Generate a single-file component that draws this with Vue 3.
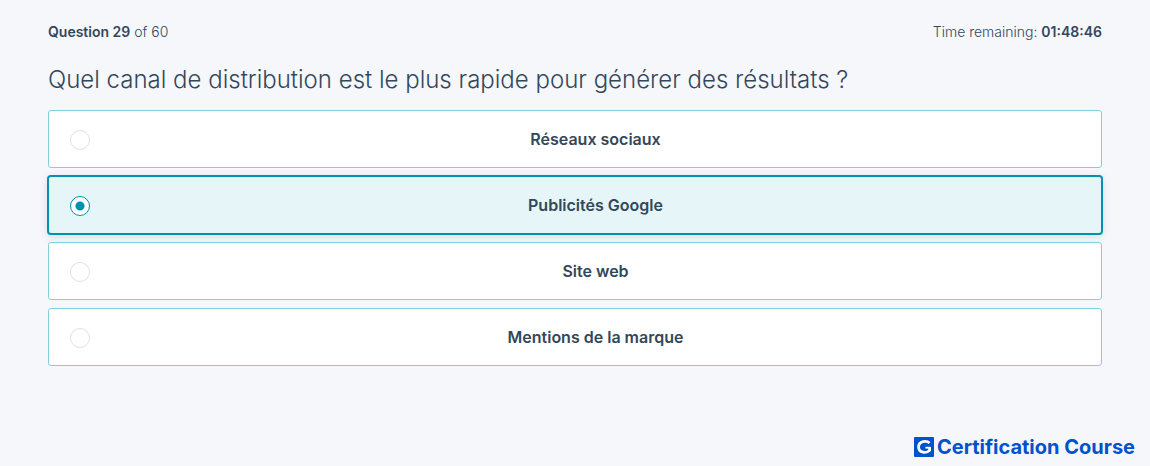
<script setup>
import { ref } from 'vue'

const options = ['Réseaux sociaux', 'Publicités Google', 'Site web', 'Mentions de la marque']
const selected = ref('Publicités Google')
</script>

<template>
  <main class="exam">
    <header class="status">
      <p><strong>Question 29</strong> of 60</p>
      <p>Time remaining: <strong>01:48:46</strong></p>
    </header>
    <h1 id="question" class="question">Quel canal de distribution est le plus rapide pour générer des résultats ?</h1>
    <div class="options" role="radiogroup" aria-labelledby="question">
      <label v-for="option in options" :key="option" class="option" :class="{ active: selected === option }">
        <input v-model="selected" class="radio" type="radio" name="answer" :value="option" />
        <span class="label">{{ option }}</span>
      </label>
    </div>
    <footer class="brand">
      <svg class="logo" viewBox="0 0 20 20" aria-hidden="true">
        <rect width="20" height="20" rx="1" fill="#0052cc" />
        <path d="M15.6 6.1C12.8 3.3 4.6 3.8 4.6 10S12.6 16.6 15.6 13.4V9.9" fill="none" stroke="#fff" stroke-width="2.8" />
        <path d="M11.4 10.7H17" stroke="#fff" stroke-width="1.8" />
      </svg>
      <span>Certification Course</span>
    </footer>
  </main>
</template>

<style>
body {
  background: #f5f7fb;
}
</style>

<style scoped>
.exam {
  box-sizing: border-box;
  min-height: 100vh;
  display: flex;
  flex-direction: column;
  padding: 20px 48px 7px;
  color: #33475b;
  font-family: Inter, "Open Sans", sans-serif;
}
.status {
  display: flex;
  justify-content: space-between;
  font-size: 14px;
  line-height: 24px;
  font-weight: 300;
}
.status p {
  margin: 0;
}
.status strong {
  font-weight: 600;
}
.question {
  margin: 18px 0 12px;
  font-size: 24px;
  line-height: 36px;
  font-weight: 300;
}
.options {
  display: flex;
  flex-direction: column;
  gap: 8px;
}
.option {
  box-sizing: border-box;
  min-height: 58px;
  display: flex;
  align-items: center;
  padding: 16px 0 16px 21px;
  border: 1px solid #7fd1de;
  border-radius: 3px;
  background: #fff;
  cursor: pointer;
}
.option.active {
  border-color: #0091ae;
  background: #e5f5f8;
  box-shadow: 0 0 0 1px #0091ae, 0 2px 8px 1px rgba(51, 71, 91, 0.15);
}
.radio {
  appearance: none;
  box-sizing: border-box;
  flex: none;
  width: 20px;
  height: 20px;
  margin: 2px 0 0;
  border: 1px solid #dbe2ec;
  border-radius: 50%;
  background: #fff;
}
.radio:checked {
  border-color: #0091ae;
  background: radial-gradient(circle, #0091ae 4px, #fff 5px);
}
.label {
  flex: 1;
  text-align: center;
  font-size: 16px;
  line-height: 24px;
  font-weight: 600;
}
.brand {
  display: flex;
  align-items: center;
  justify-content: flex-end;
  gap: 3px;
  margin: auto -33px 0 0;
  color: #0052cc;
  font-size: 20px;
  line-height: 24px;
  font-weight: 700;
}
.logo {
  width: 20px;
  height: 20px;
}
</style>
